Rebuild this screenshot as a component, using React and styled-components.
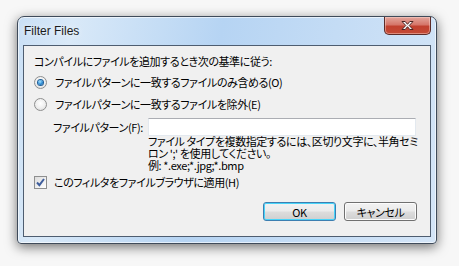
import React from 'react';
import styled, { createGlobalStyle } from 'styled-components';

const Global = createGlobalStyle`
  html, body {
    margin: 0;
    background: #f7f7f7;
  }
  body {
    font-family: "Noto Sans CJK JP", "Liberation Sans", sans-serif;
  }
`;

const Page = styled.div`
  padding: 16px 0 0 17px;
  height: 266px;
  box-sizing: border-box;
`;

const Window = styled.div`
  width: 420px;
  box-sizing: border-box;
  border: 1px solid #3f4b5a;
  border-radius: 7px 7px 4px 4px;
  padding: 0 5px 6px 5px;
  background: linear-gradient(100deg, #c9dff5 0%, #d9e9f8 12%, #b6d4f3 45%, #c4dcf5 70%, #d4e5f7 100%);
  box-shadow: 0 3px 12px rgba(0, 0, 0, 0.55), inset 0 0 0 1px rgba(255, 255, 255, 0.6);
`;

const TitleBar = styled.div`
  height: 28px;
  display: flex;
  align-items: flex-start;
  justify-content: space-between;
`;

const Title = styled.div`
  font-family: "Liberation Sans", sans-serif;
  font-size: 12px;
  color: #1b1b1b;
  padding: 7px 0 0 1px;
  text-shadow: 0 0 6px rgba(255, 255, 255, 0.9);
`;

const CloseButton = styled.div`
  width: 47px;
  height: 18px;
  box-sizing: border-box;
  border: 1px solid #5c2b28;
  border-top: none;
  border-radius: 0 0 5px 5px;
  background: linear-gradient(#e3a69c 0%, #d5766a 45%, #c1402f 55%, #c44a36 100%);
  box-shadow: inset 0 0 0 1px rgba(255, 220, 210, 0.45);
  display: flex;
  align-items: center;
  justify-content: center;
`;

const Client = styled.div`
  height: 192px;
  box-sizing: border-box;
  border: 1px solid #4e5d70;
  background: #f0f0f0;
  padding: 8px 13px 0 10px;
  display: flex;
  flex-direction: column;
  font-size: 11px;
  letter-spacing: -0.4px;
  color: #000;
  font-feature-settings: "palt";
  overflow: hidden;
`;

const Text = styled.div`
  line-height: 14px;
  white-space: nowrap;
`;

const OptionRow = styled.div`
  display: flex;
  align-items: center;
  height: 14px;
  margin-top: ${p => p.$gap}px;
  gap: 8px;
`;

const Radio = styled.span`
  width: 13px;
  height: 13px;
  box-sizing: border-box;
  border-radius: 50%;
  border: 1px solid #8e8f8f;
  background: radial-gradient(circle at 50% 40%, #ffffff 0%, #f0f0f0 50%, #d8d8d8 100%);
  display: flex;
  align-items: center;
  justify-content: center;
  flex: none;
  &::after {
    content: '';
    width: 5px;
    height: 5px;
    border-radius: 50%;
    display: ${p => (p.$checked ? 'block' : 'none')};
    background: radial-gradient(circle at 40% 35%, #a7e3ff 0%, #2a8ad4 55%, #0e4f8c 100%);
    box-shadow: 0 0 0 1px #1f5f98;
  }
`;

const Check = styled.span`
  width: 13px;
  height: 13px;
  box-sizing: border-box;
  border: 1px solid #8e8f8f;
  background: linear-gradient(135deg, #dcdcdc, #ffffff);
  display: flex;
  align-items: center;
  justify-content: center;
  flex: none;
`;

const PatternRow = styled.div`
  display: flex;
  align-items: center;
  margin-top: 7px;
  padding-left: 19px;
`;

const PatternLabel = styled.div`
  width: 95px;
  flex: none;
  line-height: 14px;
  white-space: nowrap;
`;

const Input = styled.div`
  width: 268px;
  height: 18px;
  box-sizing: border-box;
  background: #fff;
  border: 1px solid #e3e9ef;
  border-top-color: #abadb3;
`;

const Help = styled.div`
  margin: -1px 0 0 114px;
  line-height: 12px;
  white-space: nowrap;
`;

const CheckRow = styled(OptionRow)`
  gap: 7px;
`;

const Buttons = styled.div`
  display: flex;
  justify-content: flex-end;
  gap: 8px;
  margin-top: 13px;
`;

const Button = styled.div`
  width: 73px;
  height: 19px;
  box-sizing: border-box;
  border: 1px solid ${p => (p.$default ? '#3c7fb1' : '#707070')};
  border-radius: 3px;
  background: linear-gradient(#f2f2f2 0%, #ebebeb 48%, #dddddd 52%, #cfcfcf 100%);
  box-shadow: ${p => (p.$default ? 'inset 0 0 0 1px #48d4f9' : 'inset 0 0 0 1px #fcfcfc')};
  display: flex;
  align-items: center;
  justify-content: center;
  line-height: 14px;
`;

const CloseGlyph = () => (
  <svg width="15" height="11" viewBox="0 0 15 11">
    <path
      d="M2 1.5h3.2L7.5 4.3 9.8 1.5H13L9.2 5.5 13 9.5H9.8L7.5 6.7 5.2 9.5H2l3.8-4z"
      fill="#fff"
      stroke="#4a2320"
      strokeWidth="1"
      strokeLinejoin="round"
    />
  </svg>
);

const CheckGlyph = () => (
  <svg width="9" height="9" viewBox="0 0 9 9">
    <path d="M1 4.5l2.4 2.6L8 1" fill="none" stroke="#3f5e9c" strokeWidth="2" />
  </svg>
);

export default function App() {
  return (
    <Page>
      <Global />
      <Window>
        <TitleBar>
          <Title>Filter Files</Title>
          <CloseButton>
            <CloseGlyph />
          </CloseButton>
        </TitleBar>
        <Client>
          <Text>コンパイルにファイルを追加するとき次の基準に従う:</Text>
          <OptionRow $gap={7}>
            <Radio $checked />
            <Text>ファイルパターンに一致するファイルのみ含める(O)</Text>
          </OptionRow>
          <OptionRow $gap={8}>
            <Radio />
            <Text>ファイルパターンに一致するファイルを除外(E)</Text>
          </OptionRow>
          <PatternRow>
            <PatternLabel>ファイルパターン(F):</PatternLabel>
            <Input />
          </PatternRow>
          <Help>
            ファイル タイプを複数指定するには、区切り文字に、半角セミ
            <br />
            ロン ';' を使用してください。
            <br />
            例: *.exe;*.jpg;*.bmp
          </Help>
          <CheckRow $gap={4}>
            <Check>
              <CheckGlyph />
            </Check>
            <Text>このフィルタをファイルブラウザに適用(H)</Text>
          </CheckRow>
          <Buttons>
            <Button $default>OK</Button>
            <Button>キャンセル</Button>
          </Buttons>
        </Client>
      </Window>
    </Page>
  );
}
